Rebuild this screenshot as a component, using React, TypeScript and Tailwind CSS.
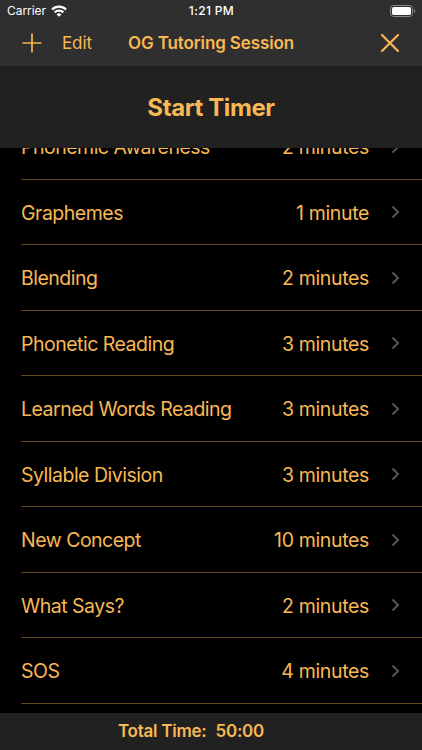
import React from 'react';

const activities = [
    { name: 'Phonemic Awareness', time: '2 minutes' },
    { name: 'Graphemes', time: '1 minute' },
    { name: 'Blending', time: '2 minutes' },
    { name: 'Phonetic Reading', time: '3 minutes' },
    { name: 'Learned Words Reading', time: '3 minutes' },
    { name: 'Syllable Division', time: '3 minutes' },
    { name: 'New Concept', time: '10 minutes' },
    { name: 'What Says?', time: '2 minutes' },
    { name: 'SOS', time: '4 minutes' },
];

const StatusBar = () => {
    return (
        <div className="grid h-[22px] grid-cols-3 items-center pl-[7px] pr-[6px] text-[12px] leading-none text-white">
            <div className="flex items-center gap-[5px]">
                <span className="tracking-[-0.05px]">Carrier</span>
                <svg className="-mt-px" width="16" height="12" viewBox="0 0 16 12" fill="none" stroke="white" strokeWidth="2.2">
                    <path d="M1 4.500a10 10 0 0 1 14 0" />
                    <path d="M3.600 7.400a6.300 6.300 0 0 1 8.800 0" />
                    <path d="M8 11.800 5.600 9.400a3.400 3.400 0 0 1 4.800 0z" fill="white" stroke="none" />
                </svg>
            </div>
            <span className="whitespace-nowrap text-center font-medium tracking-[0.35px]">1:21 PM</span>
            <svg className="-mt-px justify-self-end" width="26" height="12" viewBox="0 0 26 12" fill="none">
                <rect x="0.5" y="0.5" width="22" height="11" rx="3" stroke="#8a8a8a" />
                <rect x="2" y="2" width="19" height="8" rx="1.7" fill="white" />
                <path d="M24 4c1.7.6 1.7 3.4 0 4z" fill="#8a8a8a" />
            </svg>
        </div>
    );
};

const NavBar = () => {
    return (
        <div className="grid h-[42px] grid-cols-[1fr_auto_1fr] items-center pl-[22px] pr-[22px]">
            <div className="flex items-center">
                <svg width="20" height="20" viewBox="0 0 20 20" stroke="currentColor" strokeWidth="1.7" strokeLinecap="round">
                    <path d="M10 1.2v17.6M1.2 10h17.6" />
                </svg>
                <span className="ml-5 pt-px text-[17px] tracking-[-0.1px]">Edit</span>
            </div>
            <span className="pt-px text-[17px] font-semibold tracking-[-0.12px]">OG Tutoring Session</span>
            <svg className="justify-self-end" width="20" height="20" viewBox="0 0 20 20" stroke="currentColor" strokeWidth="2.2" strokeLinecap="round">
                <path d="M2 2l16 16M18 2L2 18" />
            </svg>
        </div>
    );
};

const App = () => {
    return (
        <div className="flex h-[750px] w-[422px] flex-col overflow-hidden bg-black font-['Inter',sans-serif] text-[#f8b854]">
            <header className="h-[66px] shrink-0 bg-[#2f2f2f]">
                <StatusBar />
                <NavBar />
            </header>
            <button className="h-[82px] shrink-0 bg-[#212121] pt-px text-2xl font-bold tracking-[-0.4px]">Start Timer</button>
            <ul className="min-h-0 flex-1 overflow-hidden">
                {activities.map((activity, i) => (
                    <li
                        key={activity.name}
                        className={`ml-[21px] flex h-[65.5px] items-center border-b border-[#63481f] pr-[22px] pt-[2px] text-[19.5px] ${i === 0 ? '-mt-[33.6px]' : ''}`}
                    >
                        <span className="flex-1 tracking-[-0.5px]">{activity.name}</span>
                        <span className="tracking-[-0.35px]">{activity.time}</span>
                        <svg className="-mt-[2px] ml-[22px]" width="9" height="14" viewBox="0 0 9 14" fill="none" stroke="#555558" strokeWidth="2">
                            <path d="M1.500 1.500L7 7l-5.500 5.500" />
                        </svg>
                    </li>
                ))}
            </ul>
            <footer className="flex h-[37px] shrink-0 items-center justify-center bg-[#212121] pr-10 pt-px text-[17px] font-semibold tracking-[-0.25px]">
                <span>Total Time:</span>
                <span className="ml-[9px]">50:00</span>
            </footer>
        </div>
    );
};

export default App;
